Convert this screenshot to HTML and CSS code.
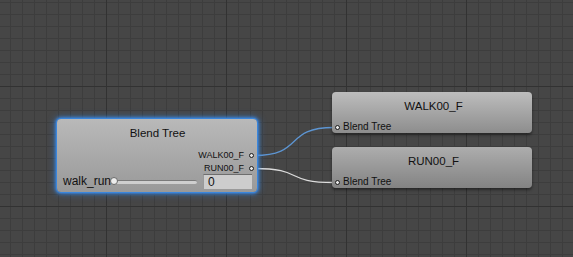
FILE: index.html
```html
<!DOCTYPE html>
<html lang="en">
<head>
    <meta charset="UTF-8">
    <title>Animator - Blend Tree</title>
    <link rel="stylesheet" href="styles.css">
</head>
<body>
<div class="graph">
    <svg class="edges" width="573" height="257" viewBox="0 0 573 257">
        <path d="M254 155.5 C 305 155.5, 283 127.5, 334 127.5" stroke="#5d95d2" stroke-width="1.3" fill="none"/>
        <path d="M254 168.5 C 305 168.5, 283 182.5, 334 182.5" stroke="#dcdcdc" stroke-width="1.3" fill="none"/>
    </svg>

    <div class="node blend selected" style="left:57px;top:119px;">
        <div class="title">Blend Tree</div>
        <div class="outputs">
            <div class="port out"><span>WALK00_F</span><i class="dot"></i></div>
            <div class="port out"><span>RUN00_F</span><i class="dot"></i></div>
        </div>
        <div class="param">
            <span class="param-name">walk_run</span>
            <div class="slider"><i class="knob"></i></div>
            <div class="field">0</div>
        </div>
    </div>

    <div class="node clip" style="left:332px;top:92px;">
        <div class="title">WALK00_F</div>
        <div class="port in"><i class="dot"></i><span>Blend Tree</span></div>
    </div>

    <div class="node clip dark" style="left:332px;top:147px;">
        <div class="title">RUN00_F</div>
        <div class="port in"><i class="dot"></i><span>Blend Tree</span></div>
    </div>
</div>
</body>
</html>
```

FILE: styles.css
```css
body {
    margin: 0;
    font-family: "Liberation Sans", Arial, sans-serif;
    background: #464646;
}
.graph {
    position: relative;
    width: 573px;
    height: 257px;
    overflow: hidden;
    background-color: #464646;
    background-image:
        linear-gradient(to right, #323232 1px, transparent 1px),
        linear-gradient(to bottom, #323232 1px, transparent 1px),
        linear-gradient(to right, #3d3d3d 1px, transparent 1px),
        linear-gradient(to bottom, #3d3d3d 1px, transparent 1px);
    background-size: 120px 120px, 120px 120px, 12px 12px, 12px 12px;
    background-position: 106px 0, 0 86px, 10px 0, 0 2px;
}
.edges {
    position: absolute;
    left: 0;
    top: 0;
}
.node {
    position: absolute;
    width: 200px;
    box-sizing: border-box;
    border-radius: 4px;
    color: #111;
    display: flex;
    flex-direction: column;
    box-shadow: 0 2px 3px rgba(0, 0, 0, 0.45);
}
.title {
    font-size: 11.5px;
    line-height: 14px;
    text-align: center;
}
.dot {
    display: block;
    width: 3px;
    height: 3px;
    border: 1px solid #1a1a1a;
    border-radius: 50%;
    background: #e8e8e8;
}
.port {
    display: flex;
    align-items: center;
    font-size: 9px;
    line-height: 13px;
    height: 13px;
}

/* blend tree node */
.blend {
    height: 73px;
    padding: 7px 5px 3px 6px;
    background: linear-gradient(#b9b9b9, #999999);
}
.selected {
    box-shadow: 0 0 0 1px #3a86dc, 0 0 3px 2px rgba(56, 136, 230, 0.85), 0 0 7px 3px rgba(56, 136, 230, 0.35);
}
.outputs {
    margin-top: 9px;
    margin-bottom: -1px;
    display: flex;
    flex-direction: column;
    align-items: flex-end;
}
.port.out span { margin-right: 5px; }
.port.out .dot { margin-right: -2px; }
.param {
    display: flex;
    align-items: center;
    height: 15px;
}
.param-name {
    font-size: 12px;
    line-height: 15px;
    color: #111;
}
.slider {
    position: relative;
    flex: 1;
    height: 3px;
    margin: 1px 6px 0 2px;
    background: #cfcfcf;
    border-top: 1px solid #7a7a7a;
    border-radius: 2px;
}
.knob {
    position: absolute;
    left: -3px;
    top: -4px;
    width: 8px;
    height: 8px;
    border-radius: 50%;
    background: #ececec;
    border: 1px solid #6a6a6a;
    box-sizing: border-box;
}
.field {
    width: 49px;
    height: 15px;
    box-sizing: border-box;
    padding-left: 4px;
    background: #cdcdcd;
    border-top: 1px solid #6e6e6e;
    border-left: 1px solid #9a9a9a;
    font-size: 12px;
    line-height: 14px;
}

/* clip nodes */
.clip {
    height: 41px;
    padding: 7px 0 0 3px;
    justify-content: space-between;
    background: linear-gradient(#bdbdbd, #8d8d8d);
}
.clip.dark {
    background: linear-gradient(#adadad, #838383);
}
.port.in {
    font-size: 10px;
    height: 12px;
    line-height: 12px;
}
.port.in span { margin-left: 3px; }
```
